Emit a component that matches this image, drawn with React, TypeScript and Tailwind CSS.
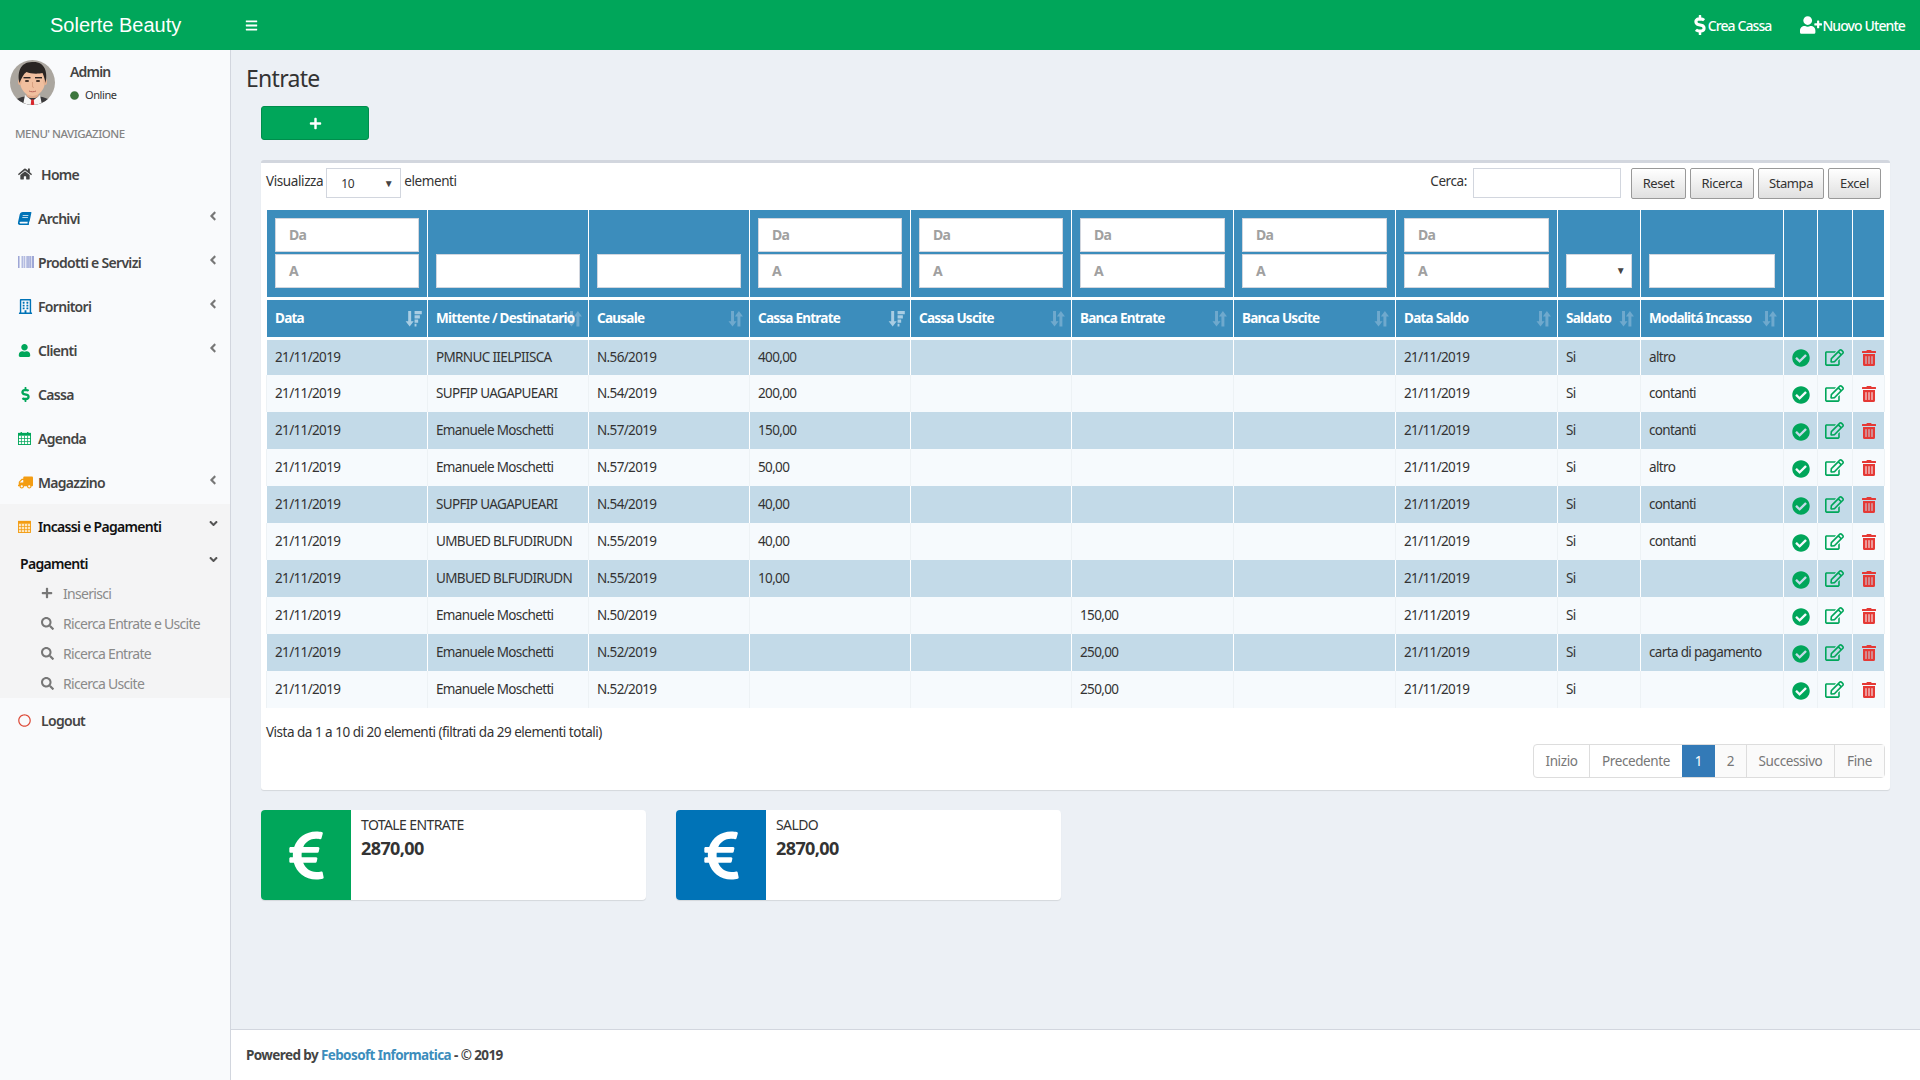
import React from "react";
import {
  FaHome, FaBook, FaBarcode, FaRegBuilding, FaUser, FaDollarSign, FaTruck,
  FaAngleLeft, FaAngleDown, FaPlus, FaSearch, FaRegCircle, FaBars, FaUserPlus, FaEuroSign, FaCheckCircle,
  FaRegEdit, FaTrashAlt, FaCircle,
} from "react-icons/fa";

const font = "font-['Noto_Sans',sans-serif]";

function SortBoth() {
  return (
    <svg viewBox="0 0 16 16" className="w-[17px] h-[17px] text-[#6fa9cd]" fill="currentColor">
      <path d="M3.800 1h2.800v9.500H9L5.200 15.500 1.400 10.500h2.400z" />
      <path d="M9.800 15.500h2.800V6H15L11.200 1 7.400 6h2.400z" />
    </svg>
  );
}

function SortDesc() {
  return (
    <svg viewBox="0 0 16 16" className="w-[17px] h-[17px] text-[#a9cde3]" fill="currentColor">
      <path d="M3 1h2.800v9.500h2.400L4.400 15.500.6 10.500H3z" />
      <path d="M9 1h6.800v3H9zM9 5h5v3H9zM9 9h3.400v3H9zM9 13h1.800v2.500H9z" />
    </svg>
  );
}

function GridIcon({ color, top }: { color: string; top?: boolean }) {
  return (
    <svg viewBox="0 0 14 14" className="w-[13px] h-[13px]" fill="none" stroke={color} strokeWidth="1">
      <rect x="0.500" y="1.500" width="13" height="12" fill={top ? "#fff" : "#fde7c2"} />
      <rect x="0" y="1" width="14" height="3" fill={color} stroke="none" />
      <path d="M0 7h14M0 10.300h14M3.700 4v10M7 4v10M10.300 4v10" strokeWidth="0.800" />
      {top && <path d="M3.500 0v3M10.500 0v3" strokeWidth="1.400" />}
    </svg>
  );
}

const menu = [
  { label: "Home", icon: <FaHome className="text-[#444] text-[14px]" />, gap: "w-[23px]" },
  { label: "Archivi", icon: <FaBook className="text-[#0073b7] text-[13px] -skew-x-12" />, arrow: true, gap: "w-[20px]" },
  { label: "Prodotti e Servizi", icon: <FaBarcode className="text-[#7a86c8] text-[16px]" />, arrow: true, gap: "w-[20px]" },
  { label: "Fornitori", icon: <FaRegBuilding className="text-[#0073b7] text-[15px]" />, arrow: true, gap: "w-[20px]" },
  { label: "Clienti", icon: <FaUser className="text-[#00a65a] text-[13px]" />, arrow: true, gap: "w-[20px]" },
  { label: "Cassa", icon: <FaDollarSign className="text-[#00a65a] text-[15px]" />, gap: "w-[20px]" },
  { label: "Agenda", icon: <GridIcon color="#00a65a" top />, gap: "w-[20px]" },
  { label: "Magazzino", icon: <FaTruck className="text-[#f39c12] text-[15px] -scale-x-100" />, arrow: true, gap: "w-[20px]" },
];

const columns = [161, 161, 161, 161, 161, 162, 162, 162, 83, 143, 34, 35, 32];

const heads = [
  "Data", "Mittente / Destinatario", "Causale", "Cassa Entrate", "Cassa Uscite", "Banca Entrate",
  "Banca Uscite", "Data Saldo", "Saldato", "Modalitá Incasso",
];

const sorted = new Set(["Data", "Cassa Entrate"]);

const rows = [
  ["PMRNUC IIELPIISCA", "N.56/2019", "400,00", "", "altro"],
  ["SUPFIP UAGAPUEARI", "N.54/2019", "200,00", "", "contanti"],
  ["Emanuele Moschetti", "N.57/2019", "150,00", "", "contanti"],
  ["Emanuele Moschetti", "N.57/2019", "50,00", "", "altro"],
  ["SUPFIP UAGAPUEARI", "N.54/2019", "40,00", "", "contanti"],
  ["UMBUED BLFUDIRUDN", "N.55/2019", "40,00", "", "contanti"],
  ["UMBUED BLFUDIRUDN", "N.55/2019", "10,00", "", ""],
  ["Emanuele Moschetti", "N.50/2019", "", "150,00", ""],
  ["Emanuele Moschetti", "N.52/2019", "", "250,00", "carta di pagamento"],
  ["Emanuele Moschetti", "N.52/2019", "", "250,00", ""],
];

function FilterBox({ text }: { text?: string }) {
  return (
    <div className="h-[34px] bg-white border border-[#d2d6de] flex items-center pl-[13px] text-[14px] font-bold text-[#a0a0a0]">
      {text}
    </div>
  );
}

function Avatar() {
  return (
    <svg viewBox="0 0 45 45" className="w-[45px] h-[45px]">
      <defs>
        <clipPath id="av"><circle cx="22.5" cy="22.5" r="22.5" /></clipPath>
      </defs>
      <g clipPath="url(#av)">
        <rect width="45" height="45" fill="#aba69f" />
        <path d="M3 45c1-7 9-9 19-9s19 2 20 9z" fill="#3b3a3c" />
        <path d="M15 35l7.500 6 7.500-6 2 10H13z" fill="#f5f5f5" />
        <path d="M21.300 39.500h2.400l.6 5.500h-3.600z" fill="#d8262c" />
        <rect x="16.500" y="28" width="12" height="10" rx="4" fill="#e0a98a" />
        <ellipse cx="22.500" cy="21" rx="12.500" ry="15" fill="#f0bf9f" />
        <ellipse cx="9.800" cy="22" rx="1.800" ry="3" fill="#e6b08f" />
        <ellipse cx="35.200" cy="22" rx="1.800" ry="3" fill="#e6b08f" />
        <path d="M9.500 23C7 13 10 2 22 2c13-1 16 10 13.500 21-1-5-2-8-3-10-4 1-12 1-16-1-3 2-5 6-7 11z" fill="#2a2523" />
        <rect x="13.500" y="17" width="7" height="1.400" fill="#2a2523" />
        <rect x="25" y="17" width="7" height="1.400" fill="#2a2523" />
        <ellipse cx="17" cy="21" rx="2.200" ry="1.100" fill="#3a2a22" />
        <ellipse cx="28" cy="21" rx="2.200" ry="1.100" fill="#3a2a22" />
        <path d="M22.500 22v5l1.500.5" stroke="#d39a7b" strokeWidth="0.800" fill="none" />
        <path d="M19 31c2 1 5 1 7 0" stroke="#b8645a" strokeWidth="1" fill="none" />
      </g>
    </svg>
  );
}

function InfoBox({ color, title }: { color: string; title: string }) {
  return (
    <div className="w-[385px] h-[90px] flex bg-white rounded-sm shadow-[0_1px_1px_rgba(0,0,0,0.1)] overflow-hidden">
      <div className={`w-[90px] flex items-center justify-center text-white ${color}`}>
        <FaEuroSign className="text-[55px]" />
      </div>
      <div className="pl-[10px] pt-[5px]">
        <div className="text-[14px] leading-[20px] uppercase text-[#333] tracking-[-0.6px]">{title}</div>
        <div className="text-[18px] leading-[26px] font-bold text-[#333] tracking-[-0.6px]">2870,00</div>
      </div>
    </div>
  );
}

export default function App() {
  return (
    <div className={`${font} w-[1920px] h-[1080px] overflow-hidden flex flex-col bg-[#ecf0f5] text-[#333]`}>
      <header className="h-[50px] shrink-0 bg-[#00a65a] text-white flex items-center">
        <div className="w-[230px] pl-[50px] font-['Liberation_Sans',sans-serif] text-[20px]">Solerte Beauty</div>
        <FaBars className="ml-[15px] text-[13px]" />
        <div className="ml-auto flex items-center font-medium text-[14px] tracking-[-0.9px]">
          <FaDollarSign className="text-[20px] -mr-[2px]" />
          <span>Crea Cassa</span>
          <FaUserPlus className="text-[22px] ml-[29px]" />
          <span className="mr-[15px]">Nuovo Utente</span>
        </div>
      </header>

      <div className="flex-1 flex min-h-0">
        <aside className="w-[231px] shrink-0 bg-[#f9fafc] border-r border-[#d2d6de] flex flex-col">
          <div className="h-[68px] pl-[10px] pt-[10px] flex">
            <Avatar />
            <div className="ml-[15px]">
              <div className="text-[14px] font-semibold text-[#444] tracking-[-0.8px] leading-[16px] mt-[4px]">Admin</div>
              <div className="flex items-center mt-[8px] text-[11px] tracking-[-0.4px] leading-[14px]">
                <FaCircle className="text-[#3c763d] text-[9px] mr-[6px]" />Online
              </div>
            </div>
          </div>
          <div className="pl-[15px] text-[11.500px] leading-[16px] mt-[8px] font-medium text-[#848484] tracking-[-0.5px]">MENU' NAVIGAZIONE</div>
          <nav className="mt-[10px]">
            {menu.map((m) => (
              <div key={m.label} className="h-[44px] flex items-center relative text-[14px] font-semibold tracking-[-0.7px] text-[#444]">
                <span className={`${m.gap} ml-[18px] flex justify-start`}>{m.icon}</span>
                <span>{m.label}</span>
                {m.arrow && <FaAngleLeft className="absolute left-[206px] top-[13px] text-[14px] text-[#777]" />}
              </div>
            ))}
          </nav>
          <div className="bg-[#f4f4f5] h-[194px]">
            <div className="h-[44px] flex items-center relative text-[14px] font-semibold tracking-[-0.7px] text-[#111]">
              <span className="w-[20px] ml-[18px] flex justify-start"><GridIcon color="#f39c12" /></span>
              <span>Incassi e Pagamenti</span>
              <FaAngleDown className="absolute left-[207px] top-[13px] text-[13px] text-[#555]" />
            </div>
            <div className="h-[30px] flex items-center relative text-[14px] font-semibold tracking-[-0.7px] text-[#111] pl-[20px]">
              Pagamenti
              <FaAngleDown className="absolute left-[207px] top-[5px] text-[13px] text-[#555]" />
            </div>
            {[
              { l: "Inserisci", i: <FaPlus className="text-[12px]" /> },
              { l: "Ricerca Entrate e Uscite", i: <FaSearch className="text-[13px]" /> },
              { l: "Ricerca Entrate", i: <FaSearch className="text-[13px]" /> },
              { l: "Ricerca Uscite", i: <FaSearch className="text-[13px]" /> },
            ].map((s) => (
              <div key={s.l} className="h-[30px] flex items-center text-[14px] tracking-[-0.7px] text-[#8a8a8a]">
                <span className="w-[14px] ml-[40px] flex justify-center text-[#777]">{s.i}</span>
                <span className="ml-[9px]">{s.l}</span>
              </div>
            ))}
          </div>
          <div className="h-[44px] flex items-center text-[14px] font-semibold tracking-[-0.7px] text-[#444]">
            <span className="w-[23px] ml-[18px] flex justify-start"><FaRegCircle className="text-[#dd4b39] text-[13px]" /></span>
            <span>Logout</span>
          </div>
        </aside>

        <div className="flex-1 flex flex-col min-w-0">
          <main className="flex-1 min-h-0">
            <h1 className="text-[23px] leading-[26px] ml-[15px] mt-[15px] tracking-[-0.7px] text-[#333]">Entrate</h1>
            <div className="ml-[30px] mt-[15px] w-[108px] h-[34px] rounded-[3px] bg-[#00a65a] border border-[#008d4c] flex items-center justify-center text-white">
              <FaPlus className="text-[13px]" />
            </div>

            <section className="ml-[30px] mt-[20px] w-[1629px] h-[630px] bg-white rounded-[3px] border-t-[3px] border-[#d2d6de] shadow-[0_1px_1px_rgba(0,0,0,0.1)] px-[5px] text-[14px] tracking-[-0.4px]">
              <div className="h-[47px] flex items-start pt-[5px]">
                <span className="mt-[3px] text-[13.500px]">Visualizza</span>
                <div className="ml-[3px] w-[75px] h-[30px] border border-[#d2d6de] flex items-center justify-between pl-[14px] pr-[7px] text-[12px]">
                  <span className="mt-[1px]">10</span><span className="text-[10px] text-[#444]">▼</span>
                </div>
                <span className="mt-[3px] ml-[3px] text-[13.500px]">elementi</span>
                <span className="ml-auto mt-[3px] text-[13.500px]">Cerca:</span>
                <div className="ml-[6px] w-[148px] h-[30px] border border-[#d2d6de]" />
                <div className="flex gap-[4px] ml-[10px] mr-[4px] text-[13px] text-[#333]">
                  {[["Reset", "w-[55px]"], ["Ricerca", "w-[64px]"], ["Stampa", "w-[66px]"], ["Excel", "w-[53px]"]].map(([b, w]) => (
                    <div key={b} className={`${w} h-[31px] flex items-center justify-center border border-[#999] rounded-[2px] bg-gradient-to-b from-white to-[#e0e0e0]`}>{b}</div>
                  ))}
                </div>
              </div>

              <table className="table-fixed border-collapse w-[1617px] text-[13.500px] tracking-[-0.65px]">
                <colgroup>
                  {columns.map((c, i) => (<col key={i} style={{ width: c }} />))}
                </colgroup>
                <thead>
                  <tr className="h-[88px] bg-[#3c8dbc] border-b-[3px] border-white">
                    {columns.map((_, i) => (
                      <th key={i} className="border-x border-white px-[8px] align-bottom pb-[9px] font-normal">
                        {[0, 3, 4, 5, 6, 7].includes(i) && (
                          <div className="flex flex-col gap-[2px]"><FilterBox text="Da" /><FilterBox text="A" /></div>
                        )}
                        {[1, 2, 9].includes(i) && <FilterBox />}
                        {i === 8 && (
                          <div className="h-[34px] bg-white border border-[#d2d6de] flex items-center justify-end pr-[6px] text-[10px] text-[#444]">▼</div>
                        )}
                      </th>
                    ))}
                  </tr>
                  <tr className="h-[40px] bg-[#3c8dbc] border-b-[3px] border-white text-white font-bold tracking-[-0.75px]">
                    {columns.map((_, i) => (
                      <th key={i} className="border-x border-white px-[8px] relative text-left font-bold whitespace-nowrap overflow-visible">
                        {heads[i] && <span className="relative z-10">{heads[i]}</span>}
                        {heads[i] && (
                          <span className="absolute right-[5px] top-[10px]">
                            {sorted.has(heads[i]) ? <SortDesc /> : <SortBoth />}
                          </span>
                        )}
                      </th>
                    ))}
                  </tr>
                </thead>
                <tbody>
                  {rows.map((r, i) => {
                    const cells = ["21/11/2019", r[0], r[1], r[2], "", r[3], "", "21/11/2019", "Si", r[4]];
                    const border = i % 2 === 0 ? "border-white" : "border-[#edf2f5]";
                    return (
                      <tr key={i} className={`h-[37px] ${i % 2 === 0 ? "bg-[#c3dae8]" : "bg-[#f6fafd]"}`}>
                        {cells.map((c, j) => (
                          <td key={j} className={`border-x ${border} px-[8px] text-[#333] whitespace-nowrap`}>{c}</td>
                        ))}
                        <td className={`border-x ${border} text-center`}>
                          <FaCheckCircle className="inline text-[#00a65a] text-[18px]" />
                        </td>
                        <td className={`border-x ${border} text-center`}>
                          <FaRegEdit className="inline text-[#00a65a] text-[19px] -mt-[2px] -ml-[2px]" />
                        </td>
                        <td className={`border-x ${border} text-center`}>
                          <FaTrashAlt className="inline text-[#e53935] text-[16px] -mt-[1px]" />
                        </td>
                      </tr>
                    );
                  })}
                </tbody>
              </table>

              <div className="mt-[14px] h-[20px] leading-[20px] text-[13.500px] tracking-[-0.5px]">Vista da 1 a 10 di 20 elementi (filtrati da 29 elementi totali)</div>
              <div className="flex justify-end mt-[2px] pr-0">
                <div className="flex h-[34px] border border-[#ddd] rounded-[4px] text-[13.500px] text-[#777]">
                  <div className="w-[56px] flex items-center justify-center border-r border-[#ddd]">Inizio</div>
                  <div className="w-[92px] flex items-center justify-center">Precedente</div>
                  <div className="w-[33px] flex items-center justify-center bg-[#337ab7] text-white">1</div>
                  <div className="w-[32px] flex items-center justify-center border-r border-[#ddd] bg-[#fafafa]">2</div>
                  <div className="w-[88px] flex items-center justify-center border-r border-[#ddd] bg-[#fafafa]">Successivo</div>
                  <div className="w-[49px] flex items-center justify-center bg-[#fafafa]">Fine</div>
                </div>
              </div>
            </section>

            <div className="ml-[30px] mt-[20px] flex gap-[30px]">
              <InfoBox color="bg-[#00a65a]" title="Totale Entrate" />
              <InfoBox color="bg-[#0073b7]" title="Saldo" />
            </div>
          </main>
          <footer className="h-[51px] shrink-0 bg-white border-t border-[#d2d6de] flex items-center pl-[15px] text-[13.500px] font-bold text-[#444] tracking-[-0.6px]">
            Powered by&nbsp;<span className="text-[#3c8dbc]">Febosoft Informatica</span>&nbsp;- © 2019
          </footer>
        </div>
      </div>
    </div>
  );
}
